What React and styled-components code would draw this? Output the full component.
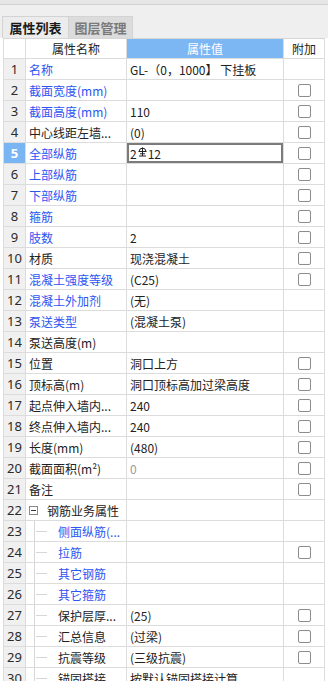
import React from "react";
import styled, { createGlobalStyle, css } from "styled-components";

const Global = createGlobalStyle`
  html, body { margin: 0; padding: 0; background: #ffffff; }
  body { font-family: "Noto Sans", "Noto Sans CJK SC", sans-serif; }
`;

const Page = styled.div`
  width: 328px;
  height: 681px;
  overflow: hidden;
  background: #ffffff;
`;

const TopBar = styled.div`
  height: 4px;
  background: #e6e6e6;
  border-bottom: 1px solid #d2d2d2;
`;

const TabStrip = styled.div`
  height: 33px;
  box-sizing: border-box;
  background: #efefef;
  display: flex;
  align-items: flex-end;
  padding-left: 2px;
`;

const Tab = styled.div`
  height: 22px;
  box-sizing: border-box;
  width: ${(p) => (p.$active ? 67 : 65)}px;
  display: flex;
  align-items: center;
  justify-content: center;
  font-family: "Noto Sans CJK SC", sans-serif;
  font-size: 13px;
  font-weight: 700;
  border: 1px solid #d3d3d3;
  border-bottom: none;
  margin-right: -1px;
  ${(p) =>
    p.$active
      ? css`
          background: #ececec;
          color: #1a1a1a;
        `
      : css`
          background: #dcdcdc;
          color: #7a7a7a;
        `}
`;

const Table = styled.div`
  margin-left: 3px;
  border-left: 1px solid #dcdcdc;
  box-sizing: border-box;
  width: 322px;
`;

const Row = styled.div`
  display: grid;
  grid-template-columns: 22px 101px 157px 41px;
  height: 21px;
  box-sizing: border-box;
  border-bottom: 1px solid #dcdcdc;
  ${(p) =>
    p.$header &&
    css`
      border-top: 1px solid #d6d6d6;
    `}
`;

const Cell = styled.div`
  box-sizing: border-box;
  border-right: 1px solid #dcdcdc;
  display: flex;
  align-items: center;
  overflow: hidden;
  white-space: nowrap;
  font-family: "Noto Sans CJK SC", sans-serif;
  font-size: 12px;
  color: #222;
`;

const NumCell = styled(Cell)`
  justify-content: center;
  font-family: "Noto Sans", "Noto Sans CJK SC", sans-serif;
  font-size: 13px;
  background: ${(p) => (p.$selected ? "#79b5f3" : "#f0f0f0")};
  color: ${(p) => (p.$selected ? "#ffffff" : "#2a2a2a")};
  font-weight: ${(p) => (p.$selected ? 700 : 400)};
`;

const HeadCell = styled(Cell)`
  justify-content: center;
  background: ${(p) => (p.$accent ? "#7cb7f4" : "#ffffff")};
  color: ${(p) => (p.$accent ? "#ffffff" : "#222")};
`;

const NameCell = styled(Cell)`
  padding-left: 3px;
  color: ${(p) => (p.$blue ? "#2c55f2" : "#222")};
`;

const ValueCell = styled(Cell)`
  padding-left: 3px;
  color: ${(p) => (p.$muted ? "#9a9a9a" : "#222")};
  ${(p) =>
    p.$selected &&
    css`
      box-shadow: inset 0 0 0 2px #7b7b7b;
    `}
`;

const ExtraCell = styled(Cell)`
  justify-content: center;
`;

const Check = styled.span`
  width: 13px;
  height: 13px;
  box-sizing: border-box;
  border: 1px solid #8c8c8c;
  border-radius: 2px;
  background: #ffffff;
`;

const Toggle = styled.span`
  width: 9px;
  height: 9px;
  box-sizing: border-box;
  border: 1px solid #8a8a8a;
  background: #fff;
  display: flex;
  align-items: center;
  justify-content: center;
  margin-right: 9px;
  &::before {
    content: "";
    width: 5px;
    height: 1px;
    background: #333;
  }
`;

const TreeGuide = styled.span`
  align-self: stretch;
  width: 13px;
  margin-left: 5px;
  border-left: 1px solid #d6d6d6;
  display: flex;
  align-items: center;
`;

const Branch = styled.span`
  width: 11px;
  margin-left: 1px;
  border-top: 1px solid #d6d6d6;
`;

const ChildText = styled.span`
  margin-left: 10px;
`;

const Rebar = styled.svg`
  width: 9px;
  height: 10px;
  margin: 0 1px;
  align-self: flex-start;
  margin-top: 4px;
`;

const RebarMark = () => (
  <Rebar viewBox="0 0 9 10">
    <path d="M1.2 4.2 A3.3 3 0 0 1 7.8 4.2" fill="none" stroke="#222" strokeWidth="1" />
    <line x1="0.5" y1="4.5" x2="8.5" y2="4.5" stroke="#222" strokeWidth="1" />
    <line x1="4.5" y1="0.5" x2="4.5" y2="9" stroke="#222" strokeWidth="1" />
    <line x1="1" y1="9" x2="8" y2="9" stroke="#222" strokeWidth="1" />
    <line x1="2" y1="6.8" x2="7" y2="6.8" stroke="#222" strokeWidth="1" />
  </Rebar>
);

const rows = [
  { name: "名称", blue: true, value: "GL-（0，1000】 下挂板" },
  { name: "截面宽度(mm)", blue: true, value: "", cb: true },
  { name: "截面高度(mm)", blue: true, value: "110", cb: true },
  { name: "中心线距左墙...", value: "(0)", cb: true },
  { name: "全部纵筋", blue: true, value: "rebar", cb: true, selected: true },
  { name: "上部纵筋", blue: true, value: "", cb: true },
  { name: "下部纵筋", blue: true, value: "", cb: true },
  { name: "箍筋", blue: true, value: "", cb: true },
  { name: "肢数", blue: true, value: "2", cb: true },
  { name: "材质", value: "现浇混凝土", cb: true },
  { name: "混凝土强度等级", blue: true, value: "(C25)", cb: true },
  { name: "混凝土外加剂", blue: true, value: "(无)" },
  { name: "泵送类型", blue: true, value: "(混凝土泵)" },
  { name: "泵送高度(m)", value: "" },
  { name: "位置", value: "洞口上方", cb: true },
  { name: "顶标高(m)", value: "洞口顶标高加过梁高度", cb: true },
  { name: "起点伸入墙内...", value: "240", cb: true },
  { name: "终点伸入墙内...", value: "240", cb: true },
  { name: "长度(mm)", value: "(480)", cb: true },
  { name: "截面面积(m²)", value: "0", muted: true, cb: true },
  { name: "备注", value: "", cb: true },
  { name: "钢筋业务属性", value: "", group: true },
  { name: "侧面纵筋(...", blue: true, value: "", child: true },
  { name: "拉筋", blue: true, value: "", child: true, cb: true },
  { name: "其它钢筋", blue: true, value: "", child: true },
  { name: "其它箍筋", blue: true, value: "", child: true },
  { name: "保护层厚...", value: "(25)", child: true, cb: true },
  { name: "汇总信息", value: "(过梁)", child: true, cb: true },
  { name: "抗震等级", value: "(三级抗震)", child: true, cb: true },
  { name: "锚固搭接", value: "按默认锚固搭接计算", child: true },
];

export default function App() {
  return (
    <Page>
      <Global />
      <TopBar />
      <TabStrip>
        <Tab $active>属性列表</Tab>
        <Tab>图层管理</Tab>
      </TabStrip>
      <Table>
        <Row $header>
          <HeadCell />
          <HeadCell>属性名称</HeadCell>
          <HeadCell $accent>属性值</HeadCell>
          <HeadCell>附加</HeadCell>
        </Row>
        {rows.map((r, i) => (
          <Row key={i}>
            <NumCell $selected={r.selected}>{i + 1}</NumCell>
            <NameCell $blue={r.blue}>
              {r.group && <Toggle />}
              {r.child ? (
                <>
                  <TreeGuide>
                    <Branch />
                  </TreeGuide>
                  <ChildText>{r.name}</ChildText>
                </>
              ) : (
                r.name
              )}
            </NameCell>
            <ValueCell $selected={r.selected} $muted={r.muted}>
              {r.value === "rebar" ? (
                <>
                  2<RebarMark />12
                </>
              ) : (
                r.value
              )}
            </ValueCell>
            <ExtraCell>{r.cb && <Check />}</ExtraCell>
          </Row>
        ))}
      </Table>
    </Page>
  );
}
